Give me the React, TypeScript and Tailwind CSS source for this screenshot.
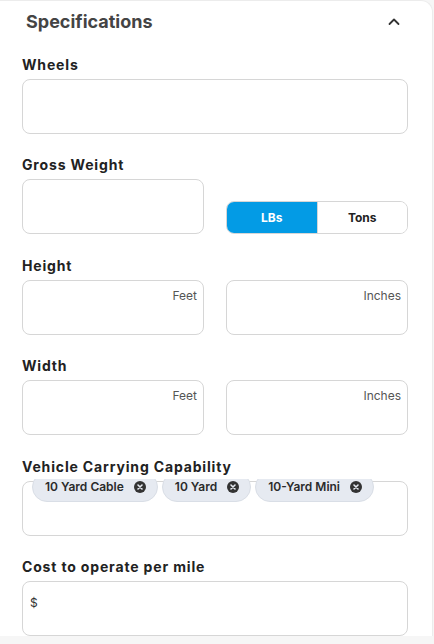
import React, { useState } from "react";

const labelCls =
  "block h-5 text-[14px] leading-5 font-bold tracking-[0.06em] text-[#222]";
const boxCls = "h-[55px] rounded-lg border border-[#d6d6d6] bg-white";

function Field({ label, children }: { label: string; children: React.ReactNode }) {
  return (
    <div className="mb-[21.4px]">
      <label className={labelCls}>{label}</label>
      <div className="mt-[4px]">{children}</div>
    </div>
  );
}

function UnitBox({ unit }: { unit: string }) {
  return (
    <div className={`${boxCls} flex justify-end pt-[7px] pr-[6px]`}>
      <span className="text-[12px] leading-4 text-[#555]">{unit}</span>
    </div>
  );
}

function Chip({ text }: { text: string }) {
  return (
    <div className="flex h-[30px] items-center gap-[10px] rounded-full border border-[#d9dee6] bg-[#e6eaf1] pl-[12px] pr-[11px]">
      <span className="text-[12px] font-semibold text-[#2b2b2b]">{text}</span>
      <svg width="12" height="12" viewBox="0 0 12 12">
        <circle cx="6" cy="6" r="6" fill="#333" />
        <path d="M4 4l4 4M8 4l-4 4" stroke="#e6eaf1" strokeWidth="1.6" strokeLinecap="round" />
      </svg>
    </div>
  );
}

export default function App() {
  const [unit, setUnit] = useState<"lbs" | "tons">("lbs");
  const [open, setOpen] = useState(true);

  return (
    <div className="min-h-[644px] w-[434px] bg-[#f6f6f6] font-['Inter',sans-serif]">
      <div className="w-[433px] rounded-tr-xl border-r border-t border-[#ececec] bg-white pl-[22px] pr-[24px]">
        <div className="flex h-[41px] items-center justify-between pl-1 pr-[6px]">
          <h2 className="text-[18px] font-bold text-[#444]">Specifications</h2>
          <button onClick={() => setOpen(!open)} className="text-[#333]">
            <svg width="16" height="16" viewBox="0 0 16 16" fill="none">
              <path
                d={open ? "M3.5 10l4.5-4.5 4.5 4.5" : "M3.5 6l4.5 4.5 4.5-4.5"}
                stroke="currentColor"
                strokeWidth="1.8"
                strokeLinecap="round"
                strokeLinejoin="round"
              />
            </svg>
          </button>
        </div>

        <div className="pt-[13px]">
          <Field label="Wheels">
            <div className={boxCls} />
          </Field>

          <Field label="Gross Weight">
            <div className="grid grid-cols-2 items-end gap-[22px]">
              <div className={boxCls} />
              <div className="flex h-[33px] overflow-hidden rounded-lg border border-[#d6d6d6] text-[12px] font-bold">
                <button
                  onClick={() => setUnit("lbs")}
                  className={`flex-1 border-r border-[#d6d6d6] ${unit === "lbs" ? "bg-[#039be5] text-white" : "bg-white text-[#222]"}`}
                >
                  LBs
                </button>
                <button
                  onClick={() => setUnit("tons")}
                  className={`flex-1 ${unit === "tons" ? "bg-[#039be5] text-white" : "bg-white text-[#222]"}`}
                >
                  Tons
                </button>
              </div>
            </div>
          </Field>

          <Field label="Height">
            <div className="grid grid-cols-2 gap-[22px]">
              <UnitBox unit="Feet" />
              <UnitBox unit="Inches" />
            </div>
          </Field>

          <Field label="Width">
            <div className="grid grid-cols-2 gap-[22px]">
              <UnitBox unit="Feet" />
              <UnitBox unit="Inches" />
            </div>
          </Field>

          <div className="mb-[21.4px]">
            <label className={labelCls}>Vehicle Carrying Capability</label>
            <div className="mt-[2px] overflow-hidden pt-[2px]">
              <div className={`${boxCls} pl-[9px]`}>
                <div className="-mt-[10px] flex gap-[4px]">
                  <Chip text="10 Yard Cable" />
                  <Chip text="10 Yard" />
                  <Chip text="10-Yard Mini" />
                </div>
              </div>
            </div>
          </div>

          <Field label="Cost to operate per mile">
            <div className={`${boxCls} pl-[7px] pt-[7px]`}>
              <span className="text-[12px] leading-4 text-[#333]">$</span>
            </div>
          </Field>
        </div>
      </div>
    </div>
  );
}
